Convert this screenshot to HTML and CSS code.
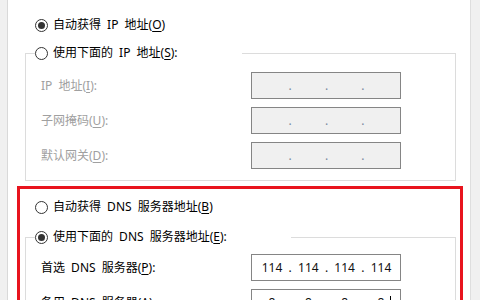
FILE: index.html
```html
<!DOCTYPE html>
<html lang="zh-CN">
<head>
<meta charset="utf-8">
<title>Internet 协议版本 4 (TCP/IPv4) 属性</title>
<link rel="stylesheet" href="styles.css">
</head>
<body>
<div class="panel">
  <label class="radio-row top-row"><span class="radio checked"></span><span class="txt">自动获得 IP 地址(<u>O</u>)</span></label>

  <fieldset class="group g1">
    <legend class="legend l1"><span class="radio"></span><span class="txt">使用下面的 IP 地址(<u>S</u>):</span></legend>
    <div class="rows rows1">
      <span class="label off">IP 地址(<u>I</u>):</span>
      <div class="ip off"><span class="f"></span><span class="d">.</span><span class="f"></span><span class="d">.</span><span class="f"></span><span class="d">.</span><span class="f"></span></div>
      <span class="label off">子网掩码(<u>U</u>):</span>
      <div class="ip off"><span class="f"></span><span class="d">.</span><span class="f"></span><span class="d">.</span><span class="f"></span><span class="d">.</span><span class="f"></span></div>
      <span class="label off">默认网关(<u>D</u>):</span>
      <div class="ip off"><span class="f"></span><span class="d">.</span><span class="f"></span><span class="d">.</span><span class="f"></span><span class="d">.</span><span class="f"></span></div>
    </div>
  </fieldset>

  <div class="highlight">
    <label class="radio-row dns-row"><span class="radio"></span><span class="txt">自动获得 DNS 服务器地址(<u>B</u>)</span></label>
    <fieldset class="group g2">
      <legend class="legend l2"><span class="radio checked"></span><span class="txt">使用下面的 DNS 服务器地址(<u>E</u>):</span></legend>
      <div class="rows rows2">
        <span class="label">首选 DNS 服务器(<u>P</u>):</span>
        <div class="ip"><span class="f">114</span><span class="d">.</span><span class="f">114</span><span class="d">.</span><span class="f">114</span><span class="d">.</span><span class="f">114</span></div>
        <span class="label">备用 DNS 服务器(<u>A</u>):</span>
        <div class="ip"><span class="f">8</span><span class="d">.</span><span class="f">8</span><span class="d">.</span><span class="f">8</span><span class="d">.</span><span class="f">8<span class="caret"></span></span></div>
      </div>
    </fieldset>
  </div>
</div>
</body>
</html>
```

FILE: styles.css
```css
html, body {
  margin: 0;
  padding: 0;
}
body {
  width: 480px;
  height: 300px;
  overflow: hidden;
  background: #f0f0f0;
  font-family: "Noto Sans", "Noto Sans CJK SC", sans-serif;
  font-size: 12px;
  color: #000;
}
.panel {
  box-sizing: border-box;
  margin-left: 7px;
  width: 464px;
  height: 300px;
  overflow: hidden;
  background: #fff;
  border-left: 1px solid #d9d9d9;
  border-right: 1px solid #dedede;
  padding-top: 17px;
}
.txt, .label {
  word-spacing: 3px;
}
u {
  text-decoration: underline;
  text-underline-offset: 2px;
}
.radio-row {
  display: flex;
  align-items: center;
  height: 16px;
  line-height: 16px;
  white-space: nowrap;
}
.top-row {
  padding-left: 27px;
}
.radio {
  box-sizing: border-box;
  flex: none;
  width: 13px;
  height: 13px;
  border: 1px solid #333;
  border-radius: 50%;
  background: #fff;
  margin-right: 5px;
  display: flex;
  align-items: center;
  justify-content: center;
}
.radio.checked::after {
  content: "";
  width: 7px;
  height: 7px;
  border-radius: 50%;
  background: #333;
}
.group {
  box-sizing: border-box;
  width: 431px;
  margin: 0;
  padding: 0;
  min-inline-size: 0;
  border: 1px solid #dcdcdc;
}
.g1 {
  margin-top: 12px;
  margin-left: 17px;
}
.legend {
  box-sizing: border-box;
  display: flex;
  align-items: center;
  height: 16px;
  line-height: 16px;
  padding: 0;
  margin-left: 9px;
  white-space: nowrap;
  background: #fff;
}
.l1 { width: 207px; }
.l2 { width: 256px; }
.rows {
  display: grid;
  grid-template-columns: 210px 150px;
  grid-auto-rows: 27px;
  row-gap: 8px;
  align-items: center;
  padding-left: 15px;
}
.rows1 {
  padding-top: 11px;
  padding-bottom: 11px;
}
.rows2 {
  padding-top: 9px;
  padding-bottom: 20px;
}
.label {
  white-space: nowrap;
  line-height: 16px;
}
.label.off {
  color: #a0a0a0;
}
.ip {
  box-sizing: border-box;
  height: 27px;
  border: 1px solid #858585;
  background: #fff;
  display: flex;
  align-items: center;
  padding-left: 5px;
  line-height: 16px;
}
.ip.off {
  background: #f0f0f0;
}
.ip .f {
  width: 30px;
  text-align: center;
  position: relative;
  color: #111;
}
.ip .d {
  width: 6.33px;
  text-align: center;
  color: #111;
}
.ip.off .d {
  color: #7b8aa0;
}
.caret {
  position: absolute;
  top: 1px;
  right: 5px;
  width: 1px;
  height: 14px;
  background: #000;
}
.highlight {
  box-sizing: border-box;
  width: 446px;
  margin-top: 5px;
  margin-left: 9px;
  border: 3px solid #e8141e;
  padding-top: 10px;
}
.dns-row {
  padding-left: 15px;
}
.g2 {
  margin-top: 14px;
  margin-left: 5px;
}
```
